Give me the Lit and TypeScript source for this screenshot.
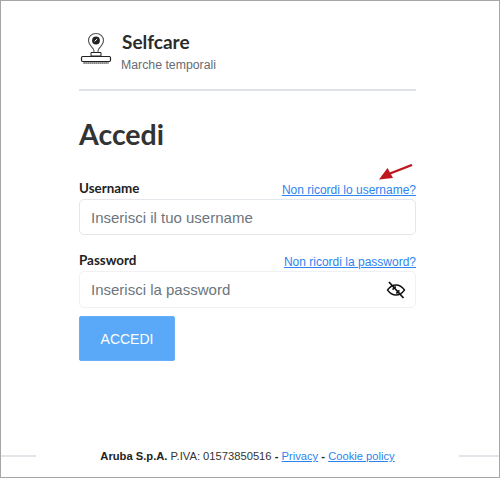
import { LitElement, html, css } from "lit";
import { customElement } from "lit/decorators.js";

@customElement("app-root")
export class AppRoot extends LitElement {
  static styles = css`
    :host { display: block; }
    * { box-sizing: border-box; }
    .frame {
      width: 500px; height: 478px; border: 1px solid #a6a6a6; background: #fff;
      display: flex; flex-direction: column;
      font-family: "Liberation Sans", Arial, sans-serif; color: #333;
    }
    .main { width: 337px; margin-left: 78px; flex: 1; display: flex; flex-direction: column; }
    .brand { display: flex; align-items: center; gap: 10px; height: 90px; padding-top: 12px; border-bottom: 2px solid #dee2e6; }
    .logo { width: 32px; height: 34px; margin-left: 1px; margin-top: -4px; }
    .brand-text { display: flex; flex-direction: column; margin-top: 3px; }
    .title { font: 700 19px/22px Lato, sans-serif; color: #2b2b2b; }
    .sub { font-size: 12.3px; line-height: 18px; color: #666c72; margin-top: 3px; margin-left: -1px; }
    h1 { font: 700 28.5px/36px Lato, sans-serif; color: #333; margin: 25px 0 0; }
    .label-row { display: flex; justify-content: space-between; align-items: flex-end; height: 18px; margin-bottom: 2px; position: relative; }
    .label-row.first { margin-top: 27px; }
    .label-row.second { margin-top: 16px; }
    label { font: 700 13.4px/18px Lato, sans-serif; color: #222; }
    a { text-decoration: underline; }
    .label-row a { font-size: 12px; line-height: 15px; color: #2d84f0; margin-bottom: -1px; }
    .field {
      height: 36px; border: 1px solid #e3e6ea; border-radius: 5px; background: #fff;
      display: flex; align-items: center; justify-content: space-between; padding: 0 11px;
      font-size: 15px; color: #6c757d;
    }
    .field.pw { height: 37px; border-color: #f0f1f3; }
    .eye { width: 20px; height: 20px; margin-right: -2px; }
    .btn {
      width: 96px; height: 45px; margin-top: 8px; background: #5aa9f8; border: 1px solid #66aef7; border-radius: 2px;
      color: #fff; font: 400 14px "Liberation Sans", Arial, sans-serif; padding: 0;
    }
    .arrow { position: absolute; right: 3px; top: -15px; width: 35px; height: 19px; }
    .footer { display: flex; align-items: center; height: 42px; font-size: 11.2px; color: #333; }
    .footer .rule { height: 2px; background: #e2e5e9; width: 35px; }
    .footer .rule.end { width: 40px; }
    .footer .text { flex: 1; text-align: center; line-height: 16px; }
    .footer b { color: #222; }
    .footer a { color: #2d84f0; }
  `;

  render() {
    return html`
      <div class="frame">
        <div class="main">
          <div class="brand">
            <svg class="logo" viewBox="0 0 32 34" fill="none" stroke="#222">
              <path d="M16 1.500c-4.600 0-7.500 3.200-7.500 7 0 3.400 2.600 5.600 4.600 8.200.8 1.100 1 2.400 1 3.800h3.800c0-1.400.2-2.700 1-3.800 2-2.600 4.600-4.800 4.600-8.200 0-3.800-2.900-7-7.500-7z" stroke-width="1.100" stroke="#555"/>
              <circle cx="16" cy="8.500" r="3.900" fill="#222" stroke="none"/>
              <path d="M14.600 9.400l2.600-2.400" stroke="#fff" stroke-width="1"/>
              <path d="M11 20.500h10v3.500H11z" stroke-width="1"/>
              <rect x="1.500" y="24.500" width="29" height="5" rx="1.200" stroke-width="1.200"/>
              <path d="M3.500 31h25" stroke-width="1.600" stroke-dasharray="1.200 .8"/>
            </svg>
            <div class="brand-text">
              <div class="title">Selfcare</div>
              <div class="sub">Marche temporali</div>
            </div>
          </div>
          <h1>Accedi</h1>
          <div class="label-row first">
            <label>Username</label>
            <a href="#">Non ricordi lo username?</a>
            <svg class="arrow" viewBox="0 0 35 19">
              <path d="M34 1L12 9.500" stroke="#c0171d" stroke-width="2.400" fill="none"/>
              <path d="M1 15.500l8.500-11.500 5.500 10z" fill="#c0171d"/>
            </svg>
          </div>
          <div class="field">Inserisci il tuo username</div>
          <div class="label-row second">
            <label>Password</label>
            <a href="#">Non ricordi la password?</a>
          </div>
          <div class="field pw">
            <span>Inserisci la password</span>
            <svg class="eye" viewBox="0 0 20 20" fill="none" stroke="#111" stroke-width="1.300">
              <path d="M1.500 10C4 6.500 7 5 10 5s6 1.500 8.500 5c-2.500 3.500-5.500 5-8.500 5s-6-1.500-8.500-5z"/>
              <path d="M7 10a3 3 0 0 1 3-3M13 10a3 3 0 0 1-3 3"/>
              <path d="M3 2l14.500 16" stroke-width="1.800"/>
            </svg>
          </div>
          <button class="btn">ACCEDI</button>
        </div>
        <div class="footer">
          <div class="rule"></div>
          <div class="text"><b>Aruba S.p.A.</b> P.IVA: 01573850516 <b>-</b> <a href="#">Privacy</a> <b>-</b> <a href="#">Cookie policy</a></div>
          <div class="rule end"></div>
        </div>
      </div>
    `;
  }
}
